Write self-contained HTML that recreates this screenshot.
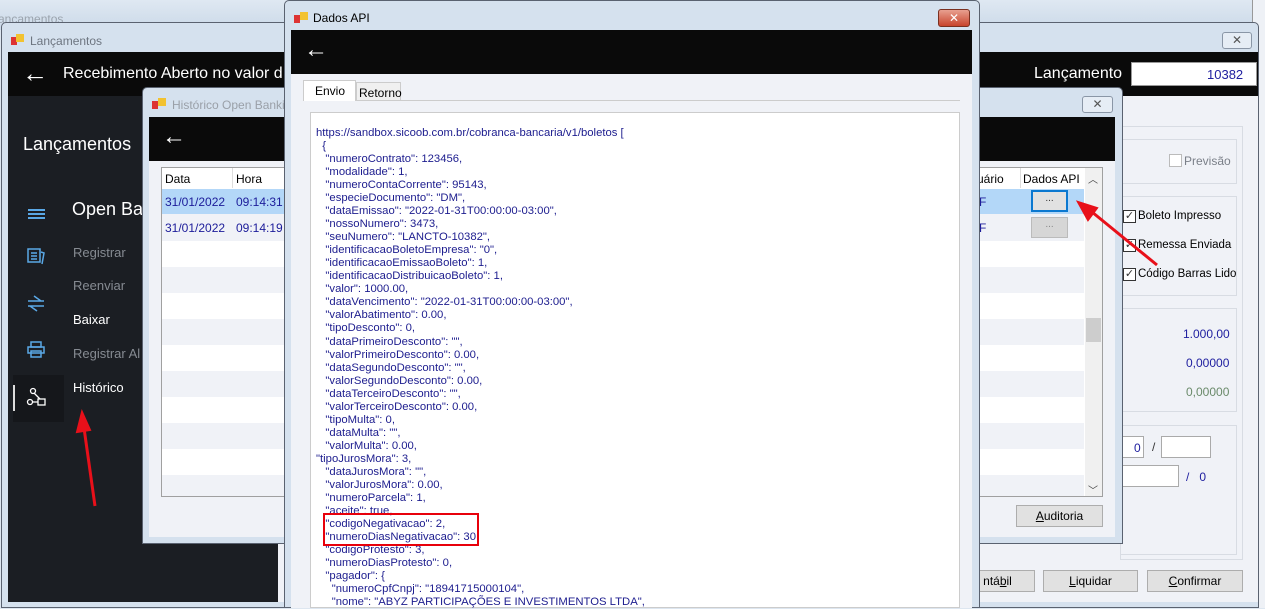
<!DOCTYPE html>
<html><head><meta charset="utf-8">
<style>
*{margin:0;padding:0;box-sizing:border-box}
body{width:1265px;height:608px;overflow:hidden;position:relative;background:#dde6f0;font-family:"Liberation Sans","DejaVu Sans",sans-serif;font-size:12px}
.a{position:absolute}
.t{position:absolute;white-space:nowrap}
.code{position:absolute;left:316px;top:127px;font-size:11.3px;line-height:13.03px;color:#1c1c8e;white-space:pre;font-family:"Liberation Sans",sans-serif}
.btn{position:absolute;background:#e1e1e1;border:1px solid #adadad;text-align:center;font-size:12px;color:#000;line-height:20px}
.cb{position:absolute;width:13px;height:13px;border:1px solid #333;background:#fff;font-size:11px;line-height:11px;text-align:center;color:#333}
.gb{position:absolute;border:1px solid #d8dce3}
</style></head><body>
<div class="a" style="left:0;top:0;width:1265px;height:30px;background:linear-gradient(#dfe8f2,#cbd9e8)"></div>
<div class="t" style="left:-2px;top:12px;color:#9aa3ad;font-size:12px">ançamentos</div>
<div class="a" style="left:1252px;top:0;width:13px;height:608px;background:#eef1f6;border-left:1px solid #999"></div>

<div class="a" style="left:1px;top:22px;width:1258px;height:586px;background:#d5e1ee;border:1px solid #5a6270;border-radius:5px 5px 0 0"></div>
<div class="a" style="left:11px;top:37px;width:6px;height:8px;background:#d33"></div>
<div class="a" style="left:16px;top:34px;width:8px;height:8px;background:#f2c230"></div>
<div class="t" style="left:30px;top:34px;color:#6d7580;font-size:12px">Lançamentos</div>
<div class="a" style="left:1222px;top:32px;width:30px;height:17px;border:1px solid #8a96a6;border-radius:3px;background:#e6edf5;text-align:center;line-height:14px;color:#555;font-size:12px">✕</div>
<div class="a" style="left:8px;top:52px;width:1250px;height:44px;background:#0a0a0a"></div>
<div class="t" style="left:22px;top:58px;color:#fff;font-size:26px">←</div>
<div class="t" style="left:63px;top:65px;color:#fff;font-size:16px">Recebimento Aberto no valor d</div>
<div class="t" style="left:1034px;top:65px;color:#fff;font-size:16px">Lançamento</div>
<div class="a" style="left:1131px;top:62px;width:126px;height:24px;background:#fff;border:1px solid #999"></div>
<div class="t" style="left:1207px;top:67px;color:#2020a0;font-size:13px">10382</div>
<div class="a" style="left:8px;top:96px;width:270px;height:506px;background:#1b1e23"></div>
<div class="a" style="left:278px;top:96px;width:980px;height:506px;background:#f0f2f7"></div>
<div class="t" style="left:23px;top:134px;color:#fff;font-size:18px">Lançamentos</div>
<div class="a" style="left:28px;top:209px;width:17px;height:1.5px;background:#5aa8e6;box-shadow:0 4px 0 #5aa8e6,0 8px 0 #5aa8e6"></div>
<div class="t" style="left:72px;top:199px;color:#fff;font-size:18px">Open Ba</div>
<div class="t" style="left:73px;top:245px;color:#868b92;font-size:13px">Registrar</div>
<div class="t" style="left:73px;top:278px;color:#868b92;font-size:13px">Reenviar</div>
<div class="t" style="left:73px;top:312px;color:#fff;font-size:13px">Baixar</div>
<div class="t" style="left:73px;top:346px;color:#868b92;font-size:13px">Registrar Al</div>
<div class="t" style="left:73px;top:380px;color:#fff;font-size:13px">Histórico</div>
<svg class="a" style="left:26px;top:247px" width="20" height="20"><rect x="2" y="2" width="12" height="13" fill="none" stroke="#5aa8e6" stroke-width="1.5"/><path d="M5 6h6M5 9h6M5 12h6M15 5l3 1-2 11" stroke="#5aa8e6" fill="none" stroke-width="1.5"/></svg>
<svg class="a" style="left:26px;top:295px" width="20" height="20"><path d="M8 1l7 5M2 6h16M2 11h16M4 11l7 5" stroke="#5aa8e6" fill="none" stroke-width="1.5"/></svg>
<svg class="a" style="left:26px;top:340px" width="20" height="20"><rect x="5" y="2" width="10" height="5" fill="none" stroke="#5aa8e6" stroke-width="1.5"/><rect x="2" y="7" width="16" height="6" fill="none" stroke="#5aa8e6" stroke-width="1.5"/><rect x="5" y="11" width="10" height="6" fill="none" stroke="#5aa8e6" stroke-width="1.5"/></svg>
<div class="a" style="left:13px;top:375px;width:51px;height:47px;background:#15171b"></div>
<div class="a" style="left:13px;top:385px;width:2px;height:26px;background:#ddd"></div>
<svg class="a" style="left:26px;top:387px" width="22" height="22"><circle cx="7" cy="4" r="2.5" fill="none" stroke="#fff" stroke-width="1.3"/><circle cx="4" cy="15" r="2.5" fill="none" stroke="#fff" stroke-width="1.3"/><rect x="12" y="12" width="7" height="6" fill="none" stroke="#fff" stroke-width="1.3"/><path d="M8 6l6 6M6.5 15h5.5" stroke="#fff" stroke-width="1.3"/></svg>
<div class="gb" style="left:1120px;top:126px;width:123px;height:434px"></div>
<div class="gb" style="left:1120px;top:139px;width:117px;height:45px"></div>
<div class="cb" style="left:1169px;top:154px;border-color:#bbb"></div>
<div class="t" style="left:1184px;top:154px;color:#7a7f88">Previsão</div>
<div class="gb" style="left:1120px;top:196px;width:117px;height:100px"></div>
<div class="cb" style="left:1123px;top:210px">✓</div><div class="t" style="left:1138px;top:210px;color:#000;font-size:11.5px">Boleto Impresso</div>
<div class="cb" style="left:1123px;top:239px">✓</div><div class="t" style="left:1138px;top:239px;color:#000;font-size:11.5px">Remessa Enviada</div>
<div class="cb" style="left:1123px;top:268px">✓</div><div class="t" style="left:1138px;top:268px;color:#000;font-size:11.5px">Código Barras Lido</div>
<div class="gb" style="left:1120px;top:308px;width:117px;height:104px"></div>
<div class="t" style="left:1183px;top:327px;color:#2020a0">1.000,00</div>
<div class="t" style="left:1186px;top:356px;color:#2020a0">0,00000</div>
<div class="t" style="left:1186px;top:385px;color:#6a8a6a">0,00000</div>
<div class="gb" style="left:1120px;top:425px;width:117px;height:130px"></div>
<div class="a" style="left:1122px;top:436px;width:22px;height:22px;background:#fff;border:1px solid #aaa"></div><div class="t" style="left:1134px;top:441px;color:#2020a0">0</div>
<div class="t" style="left:1152px;top:440px;color:#333">/</div>
<div class="a" style="left:1161px;top:436px;width:50px;height:22px;background:#fff;border:1px solid #aaa"></div>
<div class="a" style="left:1122px;top:465px;width:57px;height:22px;background:#fff;border:1px solid #aaa"></div>
<div class="t" style="left:1186px;top:470px;color:#2020a0">/&nbsp;&nbsp;&nbsp;0</div>
<div class="btn" style="left:960px;top:570px;width:75px;height:22px">ntá<u>b</u>il</div>
<div class="btn" style="left:1043px;top:570px;width:95px;height:22px"><u>L</u>iquidar</div>
<div class="btn" style="left:1147px;top:570px;width:96px;height:22px"><u>C</u>onfirmar</div>

<div class="a" style="left:142px;top:87px;width:981px;height:457px;background:#d5e1ee;border:1px solid #5a6270;border-radius:5px 5px 0 0"></div>
<div class="a" style="left:152px;top:101px;width:6px;height:8px;background:#d33"></div>
<div class="a" style="left:158px;top:98px;width:8px;height:8px;background:#f2c230"></div>
<div class="t" style="left:172px;top:98px;color:#9aa0a8;font-size:12px">Histórico Open Banki</div>
<div class="a" style="left:1082px;top:96px;width:31px;height:17px;border:1px solid #8a96a6;border-radius:3px;background:#e6edf5;text-align:center;line-height:14px;color:#555">✕</div>
<div class="a" style="left:149px;top:117px;width:966px;height:44px;background:#0a0a0a"></div>
<div class="t" style="left:162px;top:123px;color:#fff;font-size:24px">←</div>
<div class="a" style="left:149px;top:161px;width:966px;height:376px;background:#f0f2f7"></div>
<div class="a" style="left:161px;top:167px;width:942px;height:330px;background:#fff;border:1px solid #a0a0a0"></div>
<div class="a" style="left:162px;top:189px;width:922px;height:307px;background:repeating-linear-gradient(#fff 0 26px,#f0f2f7 26px 52px)"></div>
<div class="a" style="left:162px;top:189px;width:922px;height:25px;background:#b3d7f8"></div>
<div class="a" style="left:162px;top:214px;width:922px;height:26px;background:#f0f2f7"></div>
<div class="t" style="left:165px;top:172px;color:#000">Data</div>
<div class="a" style="left:232px;top:168px;width:1px;height:20px;background:#ddd"></div>
<div class="t" style="left:236px;top:172px;color:#000">Hora</div>
<div class="t" style="left:165px;top:195px;color:#1c1c9a">31/01/2022</div><div class="t" style="left:236px;top:195px;color:#1c1c9a">09:14:31</div>
<div class="t" style="left:165px;top:221px;color:#1c1c9a">31/01/2022</div><div class="t" style="left:236px;top:221px;color:#1c1c9a">09:14:19</div>
<div class="t" style="left:977px;top:172px;color:#000">uário</div>
<div class="a" style="left:1020px;top:168px;width:1px;height:20px;background:#ddd"></div>
<div class="t" style="left:1023px;top:172px;color:#000">Dados API</div>
<div class="t" style="left:979px;top:195px;color:#1c1c9a">F</div><div class="t" style="left:979px;top:221px;color:#1c1c9a">F</div>
<div class="a" style="left:1031px;top:190px;width:37px;height:22px;background:#e1e1e1;border:2px solid #0b78d0;text-align:center;font-size:10px;line-height:14px;color:#333">...</div>
<div class="a" style="left:1031px;top:217px;width:37px;height:21px;background:#d6d6d6;border:1px solid #bbb;text-align:center;font-size:10px;line-height:14px;color:#888">...</div>
<div class="a" style="left:1085px;top:168px;width:17px;height:328px;background:#f0f0f0"></div>
<div class="t" style="left:1088px;top:171px;color:#444;font-size:10px">︿</div>
<div class="a" style="left:1086px;top:318px;width:15px;height:24px;background:#cdcdcd"></div>
<div class="t" style="left:1088px;top:482px;color:#444;font-size:10px">﹀</div>
<div class="btn" style="left:1016px;top:505px;width:87px;height:22px"><u>A</u>uditoria</div>

<div class="a" style="left:284px;top:0;width:696px;height:608px;background:#d5e1ee;border:1px solid #5a6270;border-radius:5px 5px 0 0"></div>
<div class="a" style="left:294px;top:15px;width:6px;height:8px;background:#d33"></div>
<div class="a" style="left:300px;top:12px;width:8px;height:8px;background:#f2c230"></div>
<div class="t" style="left:313px;top:11px;color:#000;font-size:12px">Dados API</div>
<div class="a" style="left:938px;top:9px;width:32px;height:18px;background:linear-gradient(#e8a090,#c8442c);border:1px solid #7a3020;border-radius:3px;color:#fff;text-align:center;line-height:16px;font-size:12px;font-weight:bold">✕</div>
<div class="a" style="left:291px;top:30px;width:681px;height:44px;background:#0a0a0a"></div>
<div class="t" style="left:304px;top:36px;color:#fff;font-size:24px">←</div>
<div class="a" style="left:291px;top:74px;width:681px;height:534px;background:#f0f2f7"></div>
<div class="a" style="left:303px;top:100px;width:657px;height:1px;background:#ccc"></div>
<div class="a" style="left:303px;top:80px;width:53px;height:21px;background:#fff;border:1px solid #ccc;border-bottom:none"></div>
<div class="t" style="left:315px;top:84px;color:#000">Envio</div>
<div class="a" style="left:356px;top:82px;width:45px;height:19px;background:#f0f0f0;border:1px solid #ccc"></div>
<div class="t" style="left:359px;top:86px;color:#000">Retorno</div>
<div class="a" style="left:310px;top:112px;width:650px;height:496px;background:#fff;border:1px solid #ccc"></div>
<div class="code">https://sandbox.sicoob.com.br/cobranca-bancaria/v1/boletos [
  {
   "numeroContrato": 123456,
   "modalidade": 1,
   "numeroContaCorrente": 95143,
   "especieDocumento": "DM",
   "dataEmissao": "2022-01-31T00:00:00-03:00",
   "nossoNumero": 3473,
   "seuNumero": "LANCTO-10382",
   "identificacaoBoletoEmpresa": "0",
   "identificacaoEmissaoBoleto": 1,
   "identificacaoDistribuicaoBoleto": 1,
   "valor": 1000.00,
   "dataVencimento": "2022-01-31T00:00:00-03:00",
   "valorAbatimento": 0.00,
   "tipoDesconto": 0,
   "dataPrimeiroDesconto": "",
   "valorPrimeiroDesconto": 0.00,
   "dataSegundoDesconto": "",
   "valorSegundoDesconto": 0.00,
   "dataTerceiroDesconto": "",
   "valorTerceiroDesconto": 0.00,
   "tipoMulta": 0,
   "dataMulta": "",
   "valorMulta": 0.00,
"tipoJurosMora": 3,
   "dataJurosMora": "",
   "valorJurosMora": 0.00,
   "numeroParcela": 1,
   "aceite": true,
   "codigoNegativacao": 2,
   "numeroDiasNegativacao": 30,
   "codigoProtesto": 3,
   "numeroDiasProtesto": 0,
   "pagador": {
     "numeroCpfCnpj": "18941715000104",
     "nome": "ABYZ PARTICIPAÇÕES E INVESTIMENTOS LTDA",</div>
<div class="a" style="left:323px;top:513px;width:156px;height:33px;border:2.5px solid #e8000b"></div>

<svg class="a" style="left:0;top:0" width="1265" height="608">
<path d="M95 506L84 428" stroke="#e8101a" stroke-width="3"/><path d="M82 412L77 432L90 430Z" fill="#e8101a" stroke="#e8101a" stroke-width="2"/>
<path d="M1157 265L1092 212" stroke="#e8101a" stroke-width="3"/><path d="M1078 202L1088 220L1097 208Z" fill="#e8101a" stroke="#e8101a" stroke-width="2"/>
</svg>
</body></html>
